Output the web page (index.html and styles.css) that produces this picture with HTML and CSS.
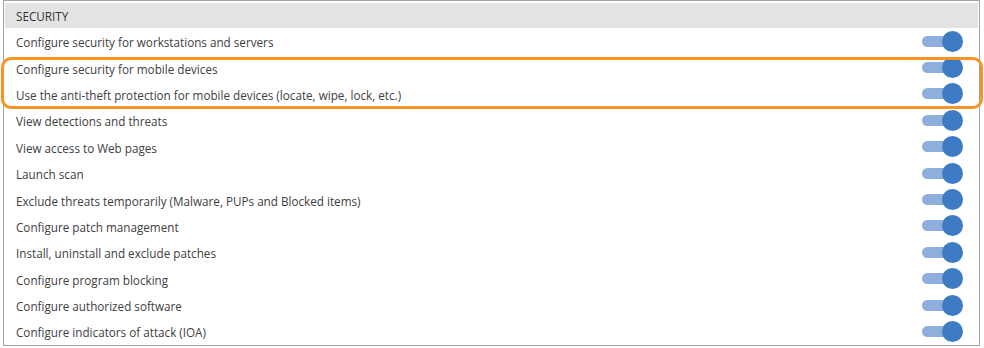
FILE: index.html
```html
<!DOCTYPE html>
<html lang="en">
<head>
    <meta charset="UTF-8">
    <title>Security permissions</title>
    <link rel="stylesheet" href="styles.css">
</head>
<body>
    <div class="panel">
        <div class="panel-header">SECURITY</div>
        <div class="row"><span class="label">Configure security for workstations and servers</span><span class="toggle"></span></div>
        <div class="row"><span class="label">Configure security for mobile devices</span><span class="toggle"></span></div>
        <div class="row"><span class="label">Use the anti-theft protection for mobile devices (locate, wipe, lock, etc.)</span><span class="toggle"></span></div>
        <div class="row"><span class="label">View detections and threats</span><span class="toggle"></span></div>
        <div class="row"><span class="label">View access to Web pages</span><span class="toggle"></span></div>
        <div class="row"><span class="label">Launch scan</span><span class="toggle"></span></div>
        <div class="row"><span class="label">Exclude threats temporarily (Malware, PUPs and Blocked items)</span><span class="toggle"></span></div>
        <div class="row"><span class="label">Configure patch management</span><span class="toggle"></span></div>
        <div class="row"><span class="label">Install, uninstall and exclude patches</span><span class="toggle"></span></div>
        <div class="row"><span class="label">Configure program blocking</span><span class="toggle"></span></div>
        <div class="row"><span class="label">Configure authorized software</span><span class="toggle"></span></div>
        <div class="row"><span class="label">Configure indicators of attack (IOA)</span><span class="toggle"></span></div>
    </div>
    <div class="highlight"></div>
</body>
</html>
```

FILE: styles.css
```css
body {
    margin: 0;
    background: #ffffff;
    font-family: "Open Sans", Arial, sans-serif;
    font-size: 11.7px;
    color: #404040;
    position: relative;
    width: 984px;
    height: 348px;
    overflow: hidden;
}
.panel {
    margin-left: 3px;
    width: 977px;
    height: 346px;
    border: 1px solid #a3a3a3;
    padding: 2px 1px 0 1px;
    box-sizing: border-box;
    display: flex;
    flex-direction: column;
}
.panel-header {
    height: 25px;
    background: #e3e3e3;
    display: flex;
    align-items: center;
    padding-left: 11px;
    padding-top: 1px;
    box-sizing: border-box;
    color: #333333;
    flex-shrink: 0;
}
.row {
    height: 26.4px;
    display: flex;
    align-items: center;
    justify-content: space-between;
    padding-left: 11px;
    padding-right: 15px;
    flex-shrink: 0;
}
.label {
    padding-top: 2px;
}
.toggle {
    position: relative;
    width: 41px;
    height: 21px;
    display: inline-block;
}
.toggle::before {
    content: "";
    position: absolute;
    left: 0;
    top: 5px;
    width: 32px;
    height: 11px;
    border-radius: 6px;
    background: #8eaedb;
}
.toggle::after {
    content: "";
    position: absolute;
    right: 0;
    top: 0;
    width: 21px;
    height: 21px;
    border-radius: 50%;
    background: #3e7bc5;
}
.highlight {
    position: absolute;
    left: 1px;
    top: 57px;
    width: 982px;
    height: 52px;
    border: 3px solid #f79424;
    border-radius: 10px;
    box-sizing: border-box;
}
```
